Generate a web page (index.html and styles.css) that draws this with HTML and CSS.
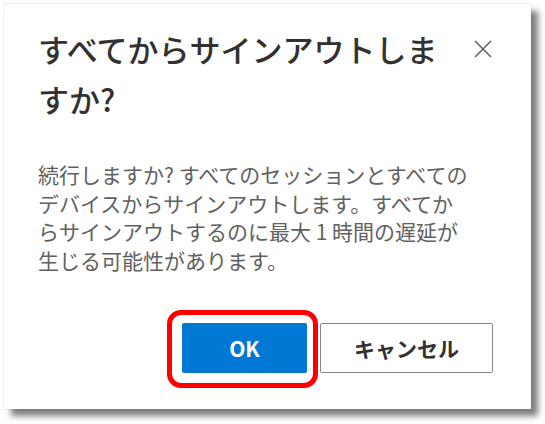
FILE: index.html
```html
<!DOCTYPE html>
<html lang="ja">
<head>
    <meta charset="UTF-8">
    <meta name="viewport" content="width=device-width, initial-scale=1.0">
    <title>サインアウト</title>
    <link rel="stylesheet" href="styles.css">
</head>
<body>
    <div class="dialog">
        <div class="head">
            <h1 class="title">すべてからサインアウトしますか?</h1>
            <div class="close" title="閉じる">
                <svg width="20" height="20" viewBox="0 0 20 20">
                    <path d="M2 2 L18 18 M18 2 L2 18" stroke="#605e5c" stroke-width="1.5" fill="none"/>
                </svg>
            </div>
        </div>
        <p class="text">続行しますか? すべてのセッションとすべての<br>デバイスからサインアウトします。すべてか<br>らサインアウトするのに最大 1 時間の遅延が<br>生じる可能性があります。</p>
        <div class="actions">
            <div class="btn ok">OK<span class="mark"></span></div>
            <div class="btn cancel">キャンセル</div>
        </div>
    </div>
</body>
</html>
```

FILE: styles.css
```css
* {
    margin: 0;
    padding: 0;
    box-sizing: border-box;
}
body {
    min-height: 424px;
    padding: 4px 0 15px 4px;
    background-color: white;
    font-family: "Noto Sans CJK JP", "Noto Sans", sans-serif;
}
.dialog {
    width: 527px;
    height: 405px;
    padding: 20px 38px 36px 34px;
    background-color: white;
    box-shadow: 0 0 0 1px rgba(0, 0, 0, 0.05), 7px 7px 6px rgba(0, 0, 0, 0.5);
}
.head {
    display: flex;
    gap: 24px;
    align-items: flex-start;
}
.title {
    flex: 1;
    font-size: 31px;
    line-height: 50px;
    font-weight: 500;
    color: #323130;
}
.close {
    width: 20px;
    height: 50px;
    display: flex;
    align-items: center;
    cursor: pointer;
}
.close svg {
    display: block;
}
.text {
    margin-top: 36px;
    font-size: 21px;
    line-height: 28.5px;
    color: #616161;
    white-space: nowrap;
}
.actions {
    margin-top: 49px;
    display: flex;
    justify-content: flex-end;
    gap: 13px;
}
.btn {
    height: 50px;
    display: flex;
    justify-content: center;
    align-items: center;
    font-size: 21px;
    font-weight: 700;
    border-radius: 2px;
    cursor: pointer;
}
.ok {
    position: relative;
    width: 125px;
    background-color: #0078d4;
    color: white;
}
.cancel {
    width: 173px;
    border: 1px solid #8a8886;
    color: #323130;
}
.mark {
    position: absolute;
    left: -15px;
    right: -11px;
    top: -13px;
    bottom: -15px;
    border: 5px solid #ff0000;
    border-radius: 14px;
}
```
